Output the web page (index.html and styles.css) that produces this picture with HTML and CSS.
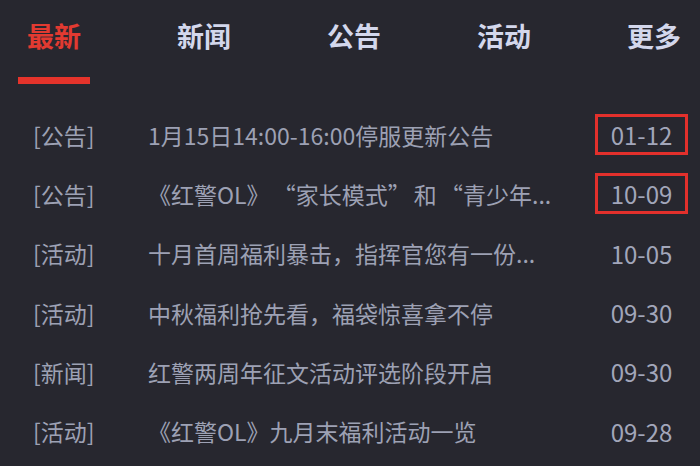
FILE: index.html
```html
<!DOCTYPE html>
<html lang="zh-CN">
<head>
<meta charset="utf-8">
<title>新闻列表</title>
<link rel="stylesheet" href="styles.css">
</head>
<body>
<div class="panel">
  <nav class="tabs">
    <div class="tab active"><span class="label">最新</span><span class="bar"></span></div>
    <div class="tab"><span class="label">新闻</span></div>
    <div class="tab"><span class="label">公告</span></div>
    <div class="tab"><span class="label">活动</span></div>
    <div class="tab"><span class="label">更多</span></div>
  </nav>
  <ul class="list">
    <li class="row"><span class="cat">[公告]</span><span class="title">1月15日14:00-16:00停服更新公告</span><span class="date hl">01-12</span></li>
    <li class="row"><span class="cat">[公告]</span><span class="title">《红警OL》 “家长模式” 和 “青少年...</span><span class="date hl">10-09</span></li>
    <li class="row"><span class="cat">[活动]</span><span class="title">十月首周福利暴击，指挥官您有一份...</span><span class="date">10-05</span></li>
    <li class="row"><span class="cat">[活动]</span><span class="title">中秋福利抢先看，福袋惊喜拿不停</span><span class="date">09-30</span></li>
    <li class="row"><span class="cat">[新闻]</span><span class="title">红警两周年征文活动评选阶段开启</span><span class="date">09-30</span></li>
    <li class="row"><span class="cat">[活动]</span><span class="title">《红警OL》九月末福利活动一览</span><span class="date">09-28</span></li>
  </ul>
</div>
</body>
</html>
```

FILE: styles.css
```css
html, body {
  margin: 0;
  padding: 0;
  background: #27272f;
}
body {
  width: 700px;
  height: 466px;
  overflow: hidden;
  font-family: "Noto Sans CJK SC", "Noto Sans", sans-serif;
}
.panel {
  display: flex;
  flex-direction: column;
}
.tabs {
  display: flex;
  padding: 22px 0 0 27px;
  height: 84px;
  box-sizing: border-box;
  overflow: hidden;
}
.tab {
  flex: 0 0 150px;
  display: flex;
  flex-direction: column;
  align-items: flex-start;
}
.label {
  font-size: 27px;
  line-height: 28px;
  font-weight: 700;
  color: #d3d7ec;
  white-space: nowrap;
}
.tab.active .label {
  color: #e23a31;
}
.bar {
  display: block;
  width: 72px;
  height: 9px;
  margin: 27px 0 0 -9px;
  background: #e5332b;
}
.list {
  list-style: none;
  margin: 21px 0 0 0;
  padding: 0 0 0 33px;
  display: flex;
  flex-direction: column;
}
.row {
  display: grid;
  grid-template-columns: 115px 447px 93px;
  align-items: center;
  height: 59.3px;
  font-size: 23px;
  color: #9da1b4;
  white-space: nowrap;
}
.cat, .title {
  line-height: 34px;
}
.title {
  word-spacing: -2px;
}
.date {
  box-sizing: border-box;
  height: 41px;
  border: 3px solid transparent;
  display: flex;
  align-items: center;
  justify-content: center;
  font-size: 24px;
  color: #a2a6ba;
}
.date.hl {
  border-color: #e2302c;
}
```
